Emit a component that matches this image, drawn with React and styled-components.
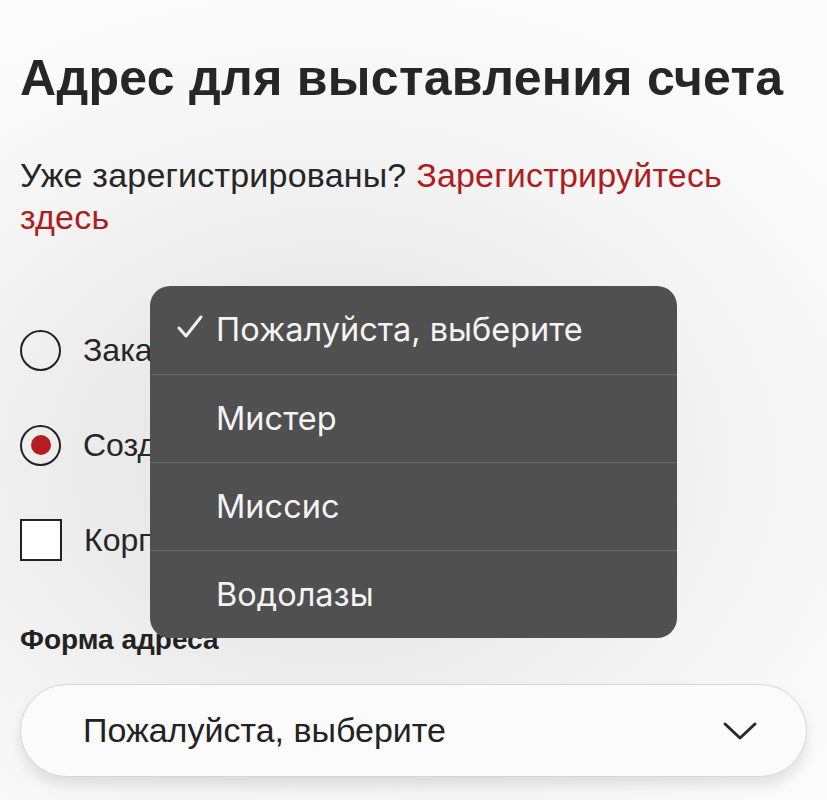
import React, { useState } from "react";
import styled, { createGlobalStyle } from "styled-components";

const GlobalStyle = createGlobalStyle`
  html, body {
    margin: 0;
    padding: 0;
  }
  body {
    font-family: "Liberation Sans", Arial, sans-serif;
    color: #222;
    background: #fafafa;
  }
`;

const titles = ["Пожалуйста, выберите", "Мистер", "Миссис", "Водолазы"];

const App = () => {
  const [selected, setSelected] = useState(0);
  const [mode, setMode] = useState("create");

  return (
    <>
      <GlobalStyle />
      <Page>
        <Title>Адрес для выставления счета</Title>
        <Lead>
          Уже зарегистрированы? <RedLink href="#">Зарегистрируйтесь здесь</RedLink>
        </Lead>

        <Options>
          <OptionRow onClick={() => setMode("guest")}>
            <Radio $checked={mode === "guest"} />
            <OptionText>Заказать как гость</OptionText>
          </OptionRow>
          <OptionRow onClick={() => setMode("create")}>
            <Radio $checked={mode === "create"} />
            <OptionText>Создать учетную запись</OptionText>
          </OptionRow>
          <OptionRow>
            <Checkbox />
            <OptionText>Корпоративный клиент</OptionText>
          </OptionRow>
        </Options>

        <FieldLabel>Форма адреса</FieldLabel>
        <Select>
          <SelectValue>{titles[selected]}</SelectValue>
          <svg width="36" height="24" viewBox="0 0 36 24">
            <path
              d="M3 5 L18 19 L33 5"
              fill="none"
              stroke="#2a2a2a"
              strokeWidth="3"
              strokeLinecap="round"
              strokeLinejoin="round"
            />
          </svg>
        </Select>

        {/* native picker popup, open over the form */}
        <Menu>
          {titles.map((t, i) => (
            <MenuItem key={t} onClick={() => setSelected(i)}>
              <Check>
                {i === selected && (
                  <svg width="28" height="26" viewBox="0 0 28 26">
                    <path
                      d="M3 14 L10 22 L25 3"
                      fill="none"
                      stroke="#f2f2f2"
                      strokeWidth="3"
                      strokeLinecap="round"
                      strokeLinejoin="round"
                    />
                  </svg>
                )}
              </Check>
              {t}
            </MenuItem>
          ))}
        </Menu>
      </Page>
    </>
  );
};

const Page = styled.div`
  position: relative;
  width: 827px;
  height: 800px;
  overflow: hidden;
  box-sizing: border-box;
  padding: 48px 20px 0 20px;
  background: radial-gradient(
    ellipse 75% 60% at 40% 58%,
    #e3e3e3 0%,
    #ebebeb 40%,
    #f5f5f5 70%,
    #fbfbfb 100%
  );
`;

const Title = styled.h1`
  margin: 0;
  font-size: 50px;
  line-height: 60px;
  font-weight: 700;
  color: #262626;
  letter-spacing: 0.3px;
`;

const Lead = styled.p`
  margin: 46px 0 0 0;
  font-size: 34px;
  line-height: 42px;
  color: #262626;
  letter-spacing: 0.2px;
  max-width: 760px;
`;

const RedLink = styled.a`
  color: #b01c22;
  text-decoration: none;
`;

const Options = styled.div`
  margin-top: 91px;
  display: flex;
  flex-direction: column;
  gap: 53px;
`;

const OptionRow = styled.label`
  display: flex;
  align-items: center;
  gap: 22px;
  height: 42px;
  cursor: pointer;
`;

const Radio = styled.span`
  box-sizing: border-box;
  width: 41px;
  height: 41px;
  border-radius: 50%;
  border: 2px solid #222;
  display: flex;
  align-items: center;
  justify-content: center;
  flex-shrink: 0;

  &::after {
    content: "";
    width: 20px;
    height: 20px;
    border-radius: 50%;
    background: #b51d22;
    display: ${(p) => (p.$checked ? "block" : "none")};
  }
`;

const Checkbox = styled.span`
  box-sizing: border-box;
  width: 42px;
  height: 42px;
  border: 2px solid #222;
  background: #fff;
  flex-shrink: 0;
`;

const OptionText = styled.span`
  font-size: 32px;
  color: #262626;
  white-space: nowrap;
`;

const FieldLabel = styled.div`
  margin-top: 63px;
  font-size: 28px;
  font-weight: 700;
  color: #222;
`;

const Select = styled.div`
  margin-top: 28px;
  height: 93px;
  box-sizing: border-box;
  border: 1px solid #d6d6d6;
  border-radius: 47px;
  background: #fbfbfb;
  box-shadow: 0 8px 14px rgba(0, 0, 0, 0.1);
  display: flex;
  align-items: center;
  justify-content: space-between;
  padding: 0 48px 0 62px;
`;

const SelectValue = styled.span`
  font-size: 34px;
  color: #222;
`;

const Menu = styled.ul`
  position: absolute;
  left: 150px;
  top: 286px;
  width: 527px;
  margin: 0;
  padding: 0;
  list-style: none;
  background: #505050;
  border-radius: 20px;
  overflow: hidden;
  font-family: Inter, "Open Sans", sans-serif;
`;

const MenuItem = styled.li`
  height: 88px;
  box-sizing: border-box;
  display: flex;
  align-items: center;
  padding-left: 26px;
  font-size: 32.5px;
  color: #f4f4f4;
  border-top: 1px solid #686868;
  cursor: pointer;

  &:first-child {
    border-top: none;
    align-items: flex-start;
    padding-top: 24px;
  }
`;

const Check = styled.span`
  width: 40px;
  display: flex;
  align-items: center;
  padding-top: 4px;
`;

export default App;
